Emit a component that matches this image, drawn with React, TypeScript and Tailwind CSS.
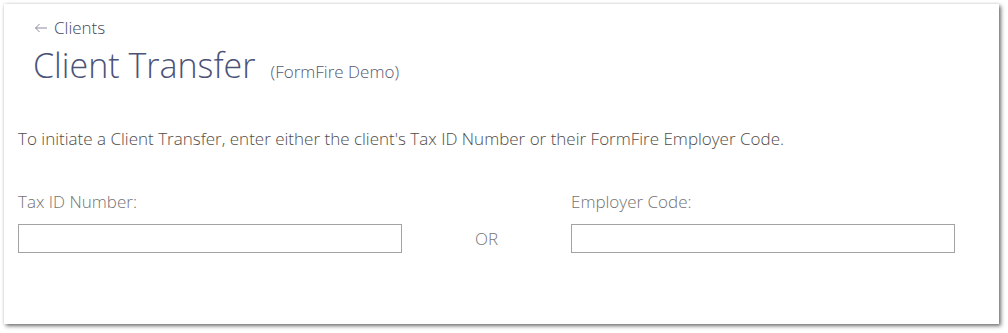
import React from "react";

export default function App() {
  return (
    <div className="w-[1008px] h-[333px] bg-white pt-[4px] pl-[4px]" style={{ fontFamily: '"Open Sans", sans-serif' }}>
      <div className="w-[995px] h-[320px] bg-white shadow-[2px_2px_4px_rgba(0,0,0,0.55),0_0_3px_rgba(0,0,0,0.12)] pl-[14px] pt-[14px]">
        <div className="pl-[16px] flex items-center gap-[6px] text-[17px] font-light text-[#45485e] leading-[20px]">
          <svg width="14" height="10" viewBox="0 0 14 10" fill="none" stroke="#8a8ca0" strokeWidth="1">
            <path d="M13 5H1.5M5.5 1L1.5 5l4 4" />
          </svg>
          <span>Clients</span>
        </div>
        <div className="pl-[15px] mt-[3px] flex items-baseline">
          <h1 className="text-[34px] font-light text-[#4b5278] leading-[48px]">Client Transfer</h1>
          <span className="ml-[15px] text-[17px] font-light text-[#55586f]">(FormFire Demo)</span>
        </div>
        <p className="mt-[39px] text-[17px] font-light text-[#4f4c49] leading-[22px]">
          To initiate a Client Transfer, enter either the client's Tax ID Number or their FormFire Employer Code.
        </p>
        <div className="mt-[41px] flex items-end">
          <div className="w-[384px]">
            <label className="block text-[17px] font-light text-[#737373] leading-[22px]">Tax ID Number:</label>
            <input className="mt-[11px] block w-[384px] h-[29px] border border-[#a3a3a3] outline-none" />
          </div>
          <div className="w-[169px] h-[29px] flex items-center justify-center text-[17px] font-light text-[#777777]">OR</div>
          <div className="w-[384px]">
            <label className="block text-[17px] font-light text-[#737373] leading-[22px]">Employer Code:</label>
            <input className="mt-[11px] block w-[384px] h-[29px] border border-[#a3a3a3] outline-none" />
          </div>
        </div>
      </div>
    </div>
  );
}
